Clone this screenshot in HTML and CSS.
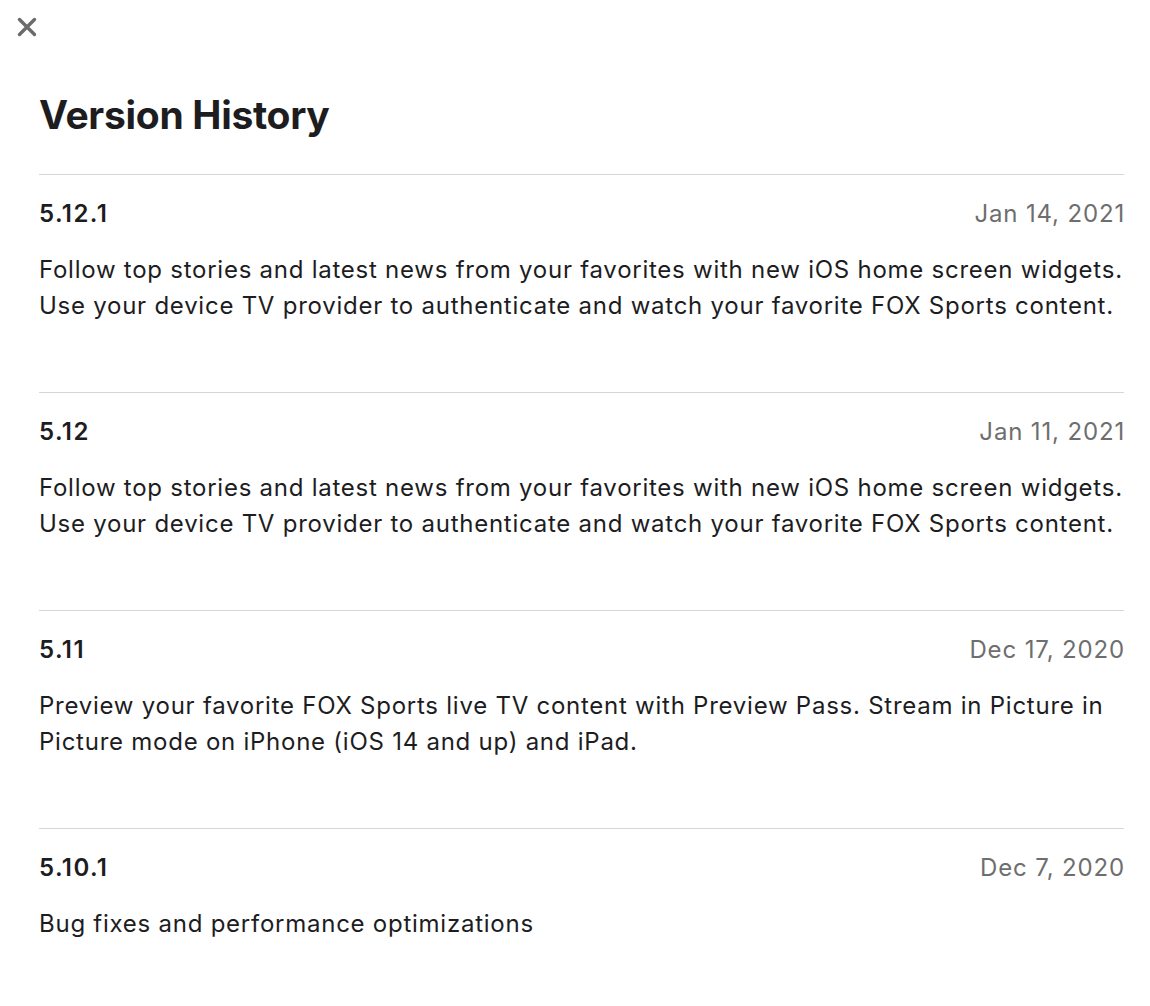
FILE: index.html
```html
<!DOCTYPE html>
<html>
<head>
  <meta charset="UTF-8">
  <title>Version History</title>
  <link rel="stylesheet" href="styles.css">
</head>
<body>

  <div class="sheet">
    <!-- close button -->
    <button class="close" aria-label="Close">
      <svg width="20" height="20" viewBox="0 0 20 20">
        <path d="M2.5 2.5 L17.5 17.5 M17.5 2.5 L2.5 17.5" stroke="#6b6b6b" stroke-width="3.4" stroke-linecap="round"/>
      </svg>
    </button>

    <h1 class="title">Version History</h1>

    <ul class="versions">
      <li class="entry">
        <div class="entry-head">
          <span class="version">5.12.1</span>
          <span class="date">Jan 14, 2021</span>
        </div>
        <p class="notes">Follow top stories and latest news from your favorites with new iOS home screen widgets.<br>Use your device TV provider to authenticate and watch your favorite FOX Sports content.</p>
      </li>
      <li class="entry">
        <div class="entry-head">
          <span class="version">5.12</span>
          <span class="date">Jan 11, 2021</span>
        </div>
        <p class="notes">Follow top stories and latest news from your favorites with new iOS home screen widgets.<br>Use your device TV provider to authenticate and watch your favorite FOX Sports content.</p>
      </li>
      <li class="entry">
        <div class="entry-head">
          <span class="version">5.11</span>
          <span class="date">Dec 17, 2020</span>
        </div>
        <p class="notes">Preview your favorite FOX Sports live TV content with Preview Pass. Stream in Picture in<br>Picture mode on iPhone (iOS 14 and up) and iPad.</p>
      </li>
      <li class="entry">
        <div class="entry-head">
          <span class="version">5.10.1</span>
          <span class="date">Dec 7, 2020</span>
        </div>
        <p class="notes">Bug fixes and performance optimizations</p>
      </li>
    </ul>
  </div>

</body>
</html>
```

FILE: styles.css
```css
body {
  margin: 0;
  background-color: #fff;
  font-family: Inter, "Noto Sans", sans-serif;
  color: #1d1d1f;
}

.sheet {
  padding: 0 26px 0 39px;
}

.close {
  display: block;
  margin: 17px 0 0 -22px;
  padding: 0;
  width: 20px;
  height: 20px;
  border: none;
  background: none;
  cursor: pointer;
}

.title {
  margin: 54px 0 0;
  font-size: 39px;
  line-height: 48px;
  font-weight: 700;
  letter-spacing: -0.3px;
}

.versions {
  list-style: none;
  margin: 35px 0 0;
  padding: 0;
}

.entry {
  border-top: 1px solid #d6d6d6;
  padding: 25px 0 68px;
}

.entry-head {
  display: flex;
  justify-content: space-between;
  align-items: baseline;
  font-size: 24px;
  line-height: 28px;
}

.version {
  font-weight: 600;
  letter-spacing: 1.4px;
}

.date {
  color: #6e6e6e;
  letter-spacing: 0.85px;
  margin-right: -1px;
}

.notes {
  margin: 24px 0 0;
  font-size: 24px;
  line-height: 36px;
  letter-spacing: 0.75px;
}
```
